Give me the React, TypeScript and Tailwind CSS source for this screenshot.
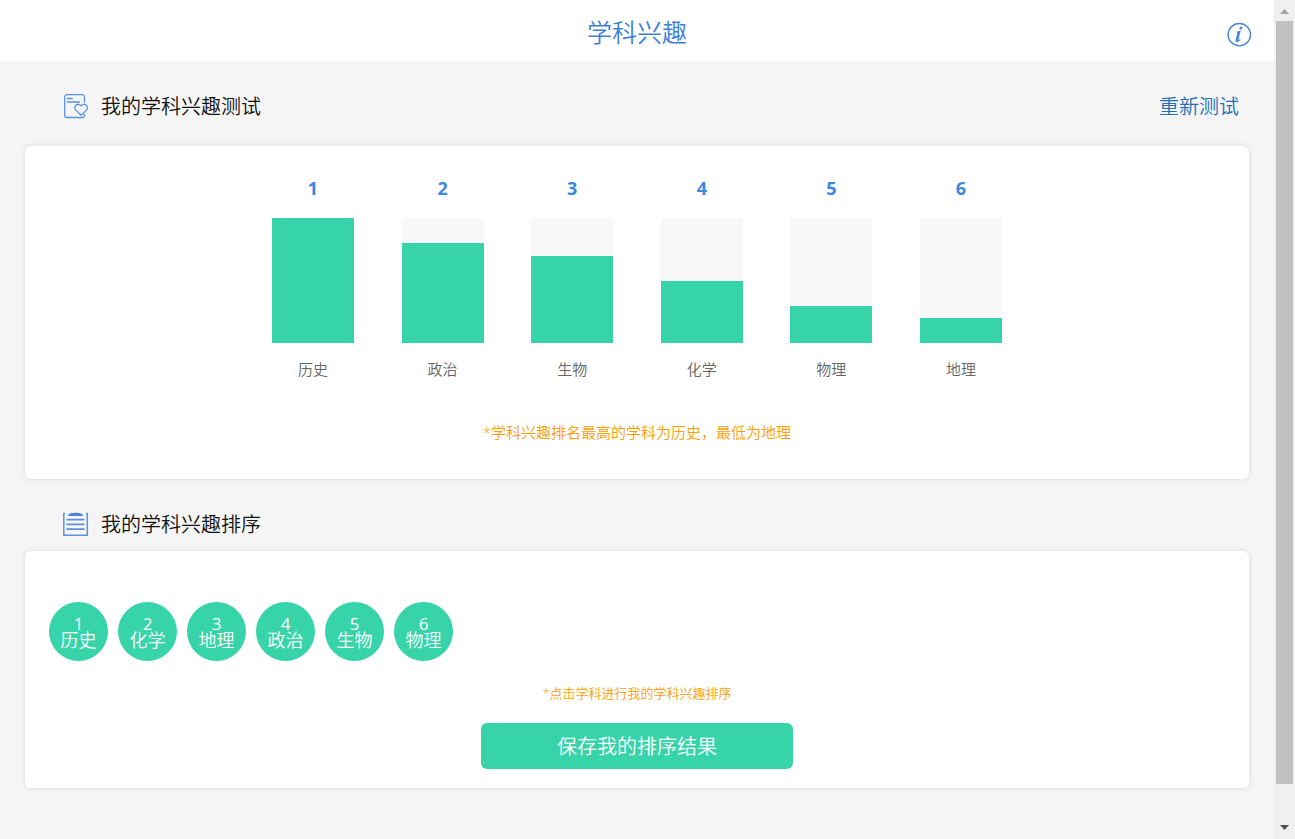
const results = [
  { name: '历史', height: 125 },
  { name: '政治', height: 100 },
  { name: '生物', height: 87 },
  { name: '化学', height: 62 },
  { name: '物理', height: 37 },
  { name: '地理', height: 25 },
];

const ranking = ['历史', '化学', '地理', '政治', '生物', '物理'];

function InfoIcon() {
  return (
    <svg viewBox="0 0 26 26" className="size-[26px]" fill="none" aria-hidden="true">
      <circle cx="13.3" cy="12.7" r="11.2" stroke="#4a86d8" strokeWidth="1.4" />
      <circle cx="14.9" cy="5.9" r="1.5" fill="#4a86d8" />
      <path d="M10.400 9.800c1.500-.2 2.500-.6 4.300-1.200l-2.200 8.900c-.2.9.3.9 1.500-.5l.5.4c-1.500 2-2.500 2.500-3.600 2.500-1.300 0-1.600-.8-1.300-2l1.700-6.700c.2-.7-.1-.9-1-.9Z" fill="#4a86d8" />
    </svg>
  );
}

function TestIcon() {
  return (
    <svg viewBox="0 0 26 26" className="size-[26px]" fill="none" stroke="#5a93da" strokeWidth="1.3" aria-hidden="true">
      <path d="M21.5 9.500V3.900a2.200 2.200 0 0 0-2.200-2.200H3.900a2.200 2.200 0 0 0-2.200 2.200v18.400a2.200 2.200 0 0 0 2.200 2.200h15.400a2.200 2.200 0 0 0 2.200-2.200v-1.500" />
      <path d="M3.800 5.500h6M3.800 9h13.200" />
      <path d="M18.100 22.300l-5.300-5.200c-3.200-3.500 1.500-8.100 5.300-4.300 3.800-3.800 8.500.8 5.300 4.300Z" strokeLinejoin="round" />
    </svg>
  );
}

function ListIcon() {
  return (
    <svg viewBox="0 0 26 26" className="size-[26px]" fill="none" stroke="#5a93da" aria-hidden="true">
      <path d="M2 2.500H.8v21.800h23.500V2.500h-1.200" strokeWidth="1.500" />
      <path d="M5 5C5 2.500 8.500 1.800 12.500 1.800s7.500.7 7.500 3.200Z" fill="#4a86d8" stroke="none" />
      <path d="M3.500 8.600h18M3.500 13.400h18M3.500 18.200h18" strokeWidth="1.700" />
    </svg>
  );
}

function ScrollTrack() {
  return (
    <div className="sticky top-0 flex h-screen w-[21px] shrink-0 flex-col items-center bg-[#f0f0f0]" aria-hidden="true">
      <svg viewBox="0 0 21 21" className="h-[21px] w-[21px]">
        <path d="M6 14h9l-4.500-5Z" fill="#a3a3a3" />
      </svg>
      <div className="h-[91%] w-[17px] bg-[#c1c1c1]" />
      <svg viewBox="0 0 21 21" className="mt-auto h-[21px] w-[21px]">
        <path d="M6 7h9l-4.500 5Z" fill="#505050" />
      </svg>
    </div>
  );
}

export default function App() {
  return (
    <div className="flex min-h-screen bg-[#f5f5f5] font-['Open_Sans','Noto_Sans_CJK_SC',sans-serif] font-[350]">
      <div className="min-w-0 flex-1">
        <header className="grid h-[61px] grid-cols-[1fr_auto_1fr] items-center bg-white px-[22px]">
          <h1 className="col-start-2 pt-0.5 text-[25px] leading-8 text-[#3f7fd6]">学科兴趣</h1>
          <button type="button" aria-label="说明" className="mt-2 cursor-pointer justify-self-end">
            <InfoIcon />
          </button>
        </header>

        <main className="px-[25px]">
          <section>
            <div className="flex h-[85px] items-center justify-between pt-1 pr-[10px] pl-[38px]">
              <div className="flex items-center gap-3">
                <TestIcon />
                <h2 className="pt-0.5 text-xl leading-7 text-[#111]">我的学科兴趣测试</h2>
              </div>
              <a href="#retest" className="pt-0.5 text-xl leading-7 text-[#1f6fb5]">重新测试</a>
            </div>
            <div className="rounded-md bg-white pt-7 pb-8 shadow-[0_0_6px_rgba(0,0,0,0.1)]">
              <ol className="mx-auto flex w-[730px] max-w-full justify-between">
                {results.map((item, index) => (
                  <li key={item.name} className="flex w-[82px] flex-col items-center">
                    <span className="text-lg leading-7 font-bold text-[#3d87dd]">{index + 1}</span>
                    <div className="mt-4 flex h-[125px] w-full items-end bg-[#f8f8f8]">
                      <div className="w-full bg-[#37d4aa]" style={{ height: item.height }} />
                    </div>
                    <span className="mt-4 text-[15px] leading-5 text-[#666]">{item.name}</span>
                  </li>
                ))}
              </ol>
              <p className="mt-[42px] pb-1 text-center text-[15px] leading-[22px] text-[#ff9c00]">
                *学科兴趣排名最高的学科为历史，最低为地理
              </p>
            </div>
          </section>

          <section>
            <div className="flex h-[72px] items-center gap-3 pt-[18px] pl-[38px]">
              <ListIcon />
              <h2 className="pt-0.5 text-xl leading-7 text-[#111]">我的学科兴趣排序</h2>
            </div>
            <div className="rounded-md bg-white px-6 pt-[51px] pb-[19px] shadow-[0_0_6px_rgba(0,0,0,0.1)]">
              <div className="flex flex-wrap gap-[10px]">
                {ranking.map((name, index) => (
                  <button
                    key={name}
                    type="button"
                    className="flex size-[59px] cursor-pointer flex-col items-center justify-center rounded-full bg-[#37d4aa] text-white"
                  >
                    <span className="text-[17px] leading-[17px] font-normal">{index + 1}</span>
                    <span className="text-lg leading-[17px]">{name}</span>
                  </button>
                ))}
              </div>
              <p className="mt-[22px] text-center text-[13px] leading-5 text-[#ff9c00]">*点击学科进行我的学科兴趣排序</p>
              <button
                type="button"
                className="mx-auto mt-5 block h-[46px] w-[312px] max-w-full cursor-pointer rounded-md bg-[#37d4aa] pt-0.5 text-xl leading-7 text-white"
              >
                保存我的排序结果
              </button>
            </div>
          </section>
        </main>
      </div>
      <ScrollTrack />
    </div>
  );
}
